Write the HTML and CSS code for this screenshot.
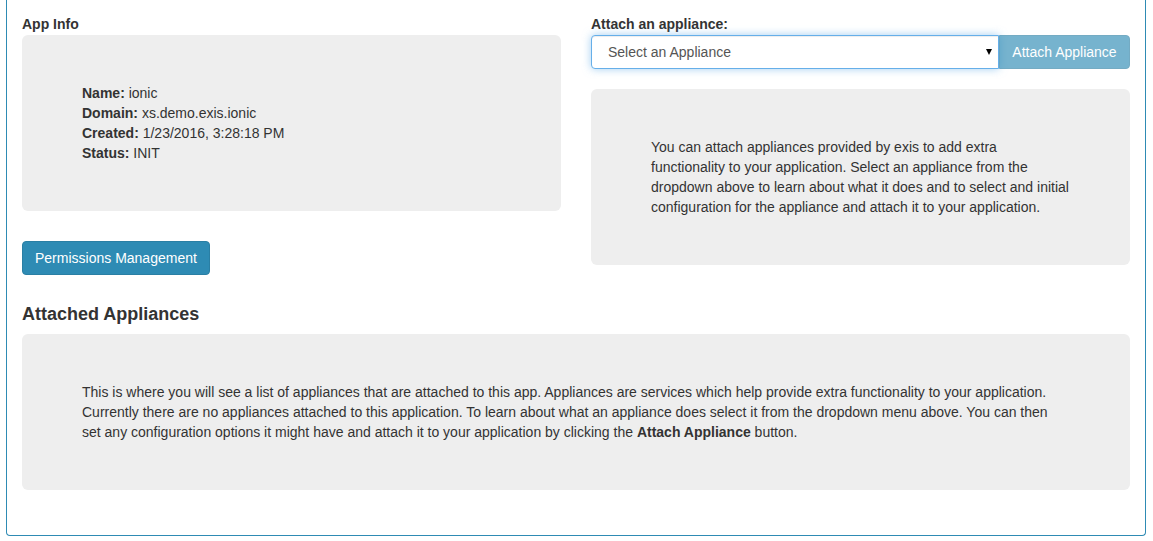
FILE: index.html
```html
<!DOCTYPE html>
<html>
<head>
<meta charset="utf-8">
<link rel="stylesheet" href="styles.css">
</head>
<body>
<div class="panel">
  <div class="row">
    <div class="col">
      <div class="label">App Info</div>
      <div class="well info-well">
        <div><b>Name:</b> ionic</div>
        <div><b>Domain:</b> xs.demo.exis.ionic</div>
        <div><b>Created:</b> 1/23/2016, 3:28:18 PM</div>
        <div><b>Status:</b> INIT</div>
      </div>
      <button class="btn">Permissions Management</button>
    </div>
    <div class="col">
      <div class="label">Attach an appliance:</div>
      <div class="input-group">
        <div class="select">Select an Appliance<span class="caret"></span></div>
        <button class="btn btn-disabled">Attach Appliance</button>
      </div>
      <div class="well desc-well">
        You can attach appliances provided by exis to add extra functionality to your application. Select an appliance from the dropdown above to learn about what it does and to select and initial configuration for the appliance and attach it to your application.
      </div>
    </div>
  </div>
  <h3 class="heading">Attached Appliances</h3>
  <div class="well list-well">
    This is where you will see a list of appliances that are attached to this app. Appliances are services which help provide extra functionality to your application. Currently there are no appliances attached to this application. To learn about what an appliance does select it from the dropdown menu above. You can then set any configuration options it might have and attach it to your application by clicking the <b>Attach Appliance</b> button.
  </div>
</div>
</body>
</html>
```
FILE: styles.css
```css
html, body {
  margin: 0;
  padding: 0;
  background: #fff;
}
body {
  font-family: "Liberation Sans", Arial, sans-serif;
  font-size: 14px;
  line-height: 20px;
  color: #333;
}
.panel {
  margin-left: 6px;
  width: 1108px;
  padding: 14px 15px 45px;
  border: 1px solid #2e8bb4;
  border-top: none;
  border-radius: 0 0 4px 4px;
}
.row {
  display: flex;
  gap: 30px;
}
.col {
  flex: 1 1 0;
  min-width: 0;
}
.label {
  font-weight: bold;
  margin-bottom: 1px;
}
.well {
  background: #eeeeee;
  border-radius: 6px;
}
.info-well {
  padding: 48px 60px 48px;
}
.desc-well {
  margin-top: 20px;
  padding: 48px 60px;
}
.list-well {
  padding: 48px 60px;
}
.btn {
  display: inline-block;
  height: 34px;
  padding: 6px 12px;
  font-family: inherit;
  font-size: 14px;
  line-height: 20px;
  color: #fff;
  background: #2e8bb4;
  border: 1px solid #2a7fa4;
  border-radius: 4px;
  box-sizing: border-box;
  margin-top: 30px;
}
.input-group {
  display: flex;
  height: 34px;
}
.select {
  flex: 1 1 auto;
  position: relative;
  box-sizing: border-box;
  height: 34px;
  padding: 6px 16px;
  background: #fff;
  border: 1px solid #66afe9;
  border-radius: 4px 0 0 4px;
  box-shadow: inset 0 1px 1px rgba(0,0,0,.075), 0 0 8px rgba(102,175,233,.6);
  color: #555;
}
.caret {
  position: absolute;
  right: 6px;
  top: 13px;
  width: 0;
  height: 0;
  border-left: 3.5px solid transparent;
  border-right: 3.5px solid transparent;
  border-top: 6px solid #000;
}
.input-group .btn {
  margin-top: 0;
  border-radius: 0 4px 4px 0;
  flex: 0 0 auto;
  width: 131px;
}
.btn-disabled {
  opacity: .65;
}
.heading {
  margin: 29px 0 10px;
  font-size: 18px;
  line-height: 20px;
  font-weight: bold;
}
```
